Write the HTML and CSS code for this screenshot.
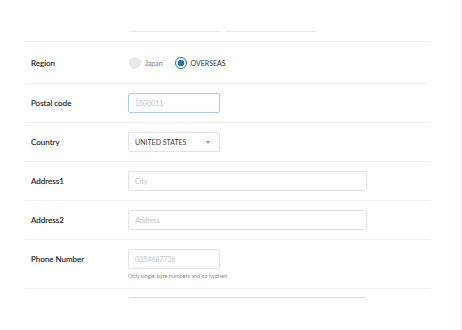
FILE: index.html
```html
<!DOCTYPE HTML>
<html>
<head>
<meta charset="utf-8">
<title>Address</title>
<meta name="viewport" content="width=device-width, initial-scale=1">
<link rel="stylesheet" href="styles.css">
</head>
<body>
<div class="page">
<form class="form">

<div class="row row-top">
  <div class="label"></div>
  <div class="field split">
    <span class="input input-line"></span>
    <span class="input input-line"></span>
  </div>
</div>

<div class="row row-region">
  <div class="label">Region</div>
  <div class="field radios">
    <span class="radio radio-off"></span><span class="radio-text">Japan</span>
    <span class="radio radio-on"></span><span class="radio-text dark">OVERSEAS</span>
  </div>
</div>

<div class="row">
  <div class="label">Postal code</div>
  <div class="field"><span class="input short focus placeholder">1500011</span></div>
</div>

<div class="row">
  <div class="label">Country</div>
  <div class="field"><span class="input short select">UNITED STATES<span class="arrow"></span></span></div>
</div>

<div class="row">
  <div class="label">Address1</div>
  <div class="field"><span class="input long placeholder">City</span></div>
</div>

<div class="row">
  <div class="label">Address2</div>
  <div class="field"><span class="input long placeholder">Address</span></div>
</div>

<div class="row row-phone">
  <div class="label">Phone Number</div>
  <div class="field column">
    <span class="input short placeholder">0354687736</span>
    <span class="help">Only single-byte numbers and no hyphen</span>
  </div>
</div>

<div class="row row-last">
  <div class="label"></div>
  <div class="field"><span class="input long input-top"></span></div>
</div>

</form>
<div class="track"></div>
</div>
</body>
</html>
```

FILE: styles.css
```css
html, body {
  margin: 0;
  height: 100%;
  overflow: hidden;
  background: #ffffff;
}
body {
  font-family: Lato, "Open Sans", sans-serif;
  color: #2b2b2b;
}
.page {
  display: flex;
  height: 100%;
}
.form {
  flex: 1;
  margin: 0 29px 0 25px;
}
.track {
  width: 3px;
  background: #f8f4f8;
}

.row {
  display: flex;
  align-items: flex-start;
  padding: 9px 0;
  border-bottom: 1px solid #f1f1f1;
}
.row-top {
  margin-top: 3px;
}
.row-region {
  align-items: center;
  height: 23px;
}
.row-phone {
  padding-bottom: 8px;
}
.row-last {
  border-bottom: none;
  padding-top: 8px;
}

.label {
  width: 97px;
  padding-left: 6px;
  font-size: 8px;
  line-height: 20px;
  color: #1e1e1e;
  -webkit-text-stroke: 0.15px #1e1e1e;
}
.row-region .label {
  line-height: 12px;
}
.field {
  display: flex;
  align-items: center;
}
.column {
  flex-direction: column;
  align-items: flex-start;
}
.split {
  gap: 4px;
}

.input {
  display: flex;
  align-items: center;
  box-sizing: border-box;
  height: 20px;
  padding: 0 6px;
  border: 1px solid #e3e3e3;
  border-radius: 2px;
  font-size: 7px;
  color: #333;
  background: #fff;
}
.input-line {
  width: 93px;
  border-color: transparent transparent #e9e9e9 transparent;
}
.input-top {
  border-color: #dcdcdc transparent transparent transparent;
}
.short {
  width: 92px;
}
.long {
  width: 239px;
}
.focus {
  border-color: #a9cde6;
}
.placeholder {
  color: #c4c4c4;
}
.select {
  justify-content: space-between;
  color: #3a3a3a;
}
.arrow {
  width: 0;
  height: 0;
  margin-right: 3px;
  border-left: 2.5px solid transparent;
  border-right: 2.5px solid transparent;
  border-top: 3px solid #9a9a9a;
}
.help {
  margin-top: 3px;
  font-size: 5.5px;
  line-height: 8px;
  color: #8a8a8a;
}

.radios {
  margin-left: 1px;
}
.radio {
  box-sizing: border-box;
  width: 12px;
  height: 12px;
  border-radius: 50%;
}
.radio-off {
  background: #e9e9e9;
}
.radio-on {
  margin-left: 12px;
  border: 1.5px solid #1f74c8;
  background: radial-gradient(circle, #1f74c8 0 3px, #ffffff 3.3px);
}
.radio-text {
  margin-left: 4px;
  font-size: 7px;
  color: #7a7a7a;
}
.radio-text.dark {
  color: #333;
}
```
